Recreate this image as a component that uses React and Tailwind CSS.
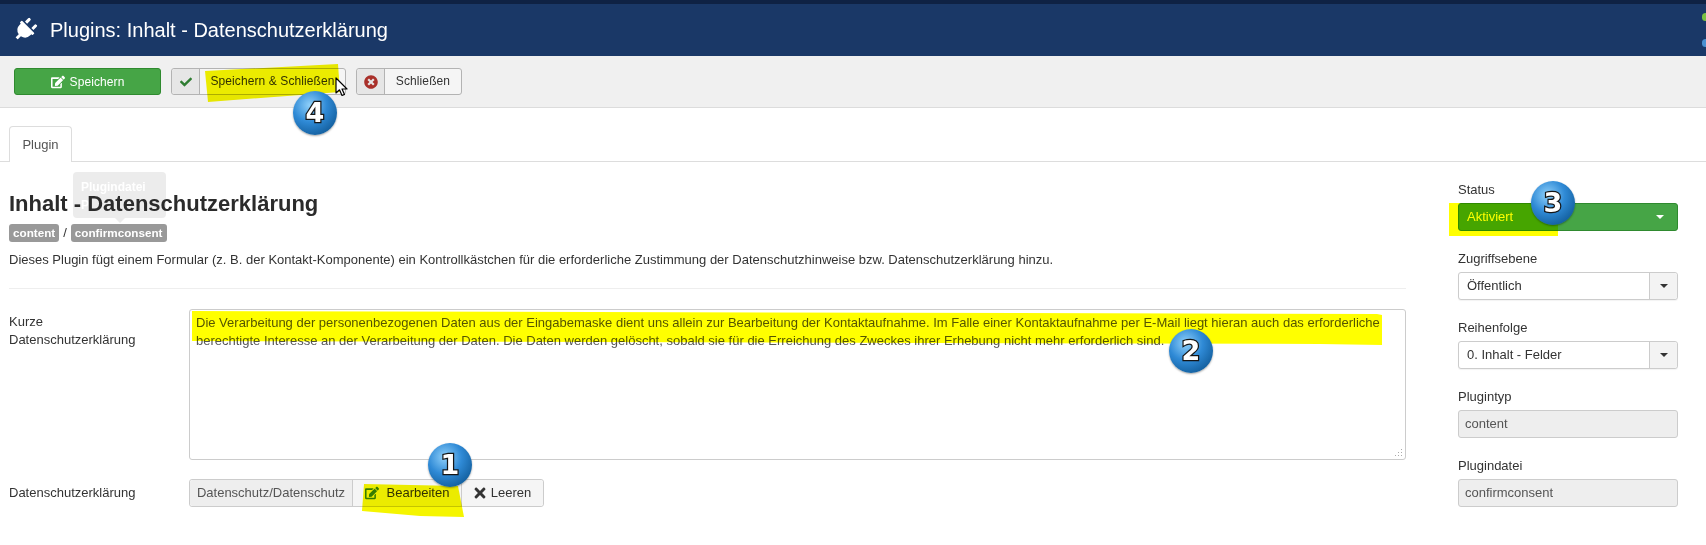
import { FaPlug, FaEdit, FaCheck, FaTimesCircle, FaTimes } from 'react-icons/fa'

const privacyText =
  'Die Verarbeitung der personenbezogenen Daten aus der Eingabemaske dient uns allein zur Bearbeitung der Kontaktaufnahme. Im Falle einer Kontaktaufnahme per E-Mail liegt hieran auch das erforderliche berechtigte Interesse an der Verarbeitung der Daten. Die Daten werden gelöscht, sobald sie für die Erreichung des Zweckes ihrer Erhebung nicht mehr erforderlich sind.'

function Caret({ className }) {
  return <span className={`w-0 h-0 border-x-[4px] border-x-transparent border-t-[4px] ${className}`} />
}

function Field({ label, children }) {
  return (
    <div className="mb-[18px]">
      <div className="h-[18px] leading-[19px] mb-[5px]">{label}</div>
      {children}
    </div>
  )
}

function SelectBox({ value }) {
  return (
    <div className="flex h-[28px] rounded-[3px] border border-[#ccc] bg-white shadow-[0_1px_1px_rgba(0,0,0,0.05)]">
      <div className="flex-1 pl-[8px] leading-[26px]">{value}</div>
      <div className="w-[28px] flex items-center justify-center bg-[#f3f3f3] border-l border-[#ccc] rounded-r-[3px]">
        <Caret className="border-t-[#333]" />
      </div>
    </div>
  )
}

function ReadOnlyBox({ value }) {
  return (
    <div className="h-[28px] rounded-[3px] border border-[#ccc] bg-[#eee] pl-[6px] leading-[26px] text-[#555]">
      {value}
    </div>
  )
}

function ToolbarButton({ icon, label, width }) {
  return (
    <button className={`flex h-[27px] ${width} rounded-[3px] border border-[#b3b3b3] bg-[#f5f5f5] text-[12px] tracking-[0.1px] text-[#333]`}>
      <span className="w-[28px] h-full flex items-center justify-center bg-[#e6e6e6] border-r border-[#b3b3b3] rounded-l-[3px]">
        {icon}
      </span>
      <span className="flex-1 h-full leading-[25px] text-center">{label}</span>
    </button>
  )
}

function NumberBall({ n, className }) {
  return (
    <div
      className={`absolute w-[44px] h-[44px] rounded-full flex items-center justify-center bg-[radial-gradient(circle_at_38%_32%,#8fd0fa_0%,#2f8ad6_42%,#14609f_78%,#0c3f70_100%)] shadow-[0_1px_2px_rgba(0,0,0,0.35)] text-white text-[27px] font-bold [font-family:'DejaVu_Sans',sans-serif] [-webkit-text-stroke:2.5px_#151515] [paint-order:stroke_fill] ${className}`}
    >
      {n}
    </div>
  )
}

export default function App() {
  return (
    <div className="relative w-[1706px] h-[545px] overflow-hidden bg-white text-[13px] text-[#333] font-['Liberation_Sans',Arial,sans-serif]">
      <div className="h-[4px] bg-[#0f2244]" />
      <header className="h-[52px] bg-[#1a3867] flex items-center pl-[13px] text-white">
        <FaPlug className="w-[24px] h-[24px] rotate-45" />
        <h2 className="ml-[13px] text-[20px]">Plugins: Inhalt - Datenschutzerklärung</h2>
      </header>

      <div className="h-[52px] bg-[#f0f0f0] border-b border-[#dcdcdc] flex items-start gap-[10px] pl-[14px] pt-[12px]">
        <button className="h-[27px] w-[147px] rounded-[3px] border border-[#2f8a2f] bg-[#46a546] text-white text-[12px] tracking-[0.1px] flex items-center justify-center gap-[5px]">
          <FaEdit className="w-[14px] h-[14px]" />
          Speichern
        </button>
        <ToolbarButton width="w-[175px]" label="Speichern & Schließen" icon={<FaCheck className="w-[12px] h-[12px] text-[#2f7d32]" />} />
        <ToolbarButton width="w-[106px]" label="Schließen" icon={<FaTimesCircle className="w-[14px] h-[14px] text-[#a9302a]" />} />
      </div>

      <div className="mt-[18px] h-[36px] pl-[9px] border-b border-[#ddd]">
        <div className="w-[63px] h-[36px] bg-white border border-b-0 border-[#ddd] rounded-t-[4px] text-center leading-[35px] text-[#555]">
          Plugin
        </div>
      </div>

      <div className="flex pl-[9px]">
        <main className="relative w-[1397px]">
          <div className="absolute left-[64px] top-[10px] w-[93px] h-[46px] rounded-[4px] bg-[#ececec] pl-[8px] pt-[6px] text-white text-[12px] font-bold leading-[18px]">
            Plugindatei
            <br />P
            <span className="absolute left-[42px] top-[46px] w-0 h-0 border-x-[5px] border-x-transparent border-t-[5px] border-t-[#ececec]" />
          </div>

          <h1 className="relative mt-[29px] text-[22px] leading-[26px] font-bold text-[#2b2b2b]">Inhalt - Datenschutzerklärung</h1>

          <div className="relative mt-[7px] flex items-center h-[18px]">
            <span className="h-[18px] px-[4px] rounded-[3px] bg-[#999] text-white text-[11.7px] font-bold leading-[18px]">content</span>
            <span className="mx-[4px]">/</span>
            <span className="h-[18px] px-[4px] rounded-[3px] bg-[#999] text-white text-[11.7px] font-bold leading-[18px]">confirmconsent</span>
          </div>

          <p className="mt-[9px] leading-[18px]">
            Dieses Plugin fügt einem Formular (z. B. der Kontakt-Komponente) ein Kontrollkästchen für die erforderliche Zustimmung der Datenschutzhinweise bzw. Datenschutzerklärung hinzu.
          </p>

          <hr className="mt-[19px] border-t border-[#eee]" />

          <div className="mt-[20px] flex">
            <label className="w-[180px] pt-[4px] leading-[18px]">
              Kurze
              <br />
              Datenschutzerklärung
            </label>
            <div className="relative flex">
              <textarea
                readOnly
                defaultValue={privacyText}
                className="w-[1217px] h-[151px] rounded-[3px] border border-[#ccc] px-[6px] py-[4px] leading-[18px] text-[#555] outline-none resize-none"
              />
              {/* resize grip */}
              <svg className="absolute right-[3px] bottom-[3px]" width="9" height="9" viewBox="0 0 9 9">
                <g fill="#aaa">
                  <rect x="7" y="1" width="1" height="1" />
                  <rect x="7" y="4" width="1" height="1" />
                  <rect x="4" y="4" width="1" height="1" />
                  <rect x="7" y="7" width="1" height="1" />
                  <rect x="4" y="7" width="1" height="1" />
                  <rect x="1" y="7" width="1" height="1" />
                </g>
              </svg>
            </div>
          </div>

          <div className="mt-[19px] flex items-center">
            <label className="w-[180px]">Datenschutzerklärung</label>
            <div className="flex h-[28px] rounded-[3px] border border-[#ccc]">
              <span className="w-[163px] bg-[#eee] border-r border-[#ccc] rounded-l-[3px] text-center leading-[26px] text-[#555]">
                Datenschutz/Datenschutz
              </span>
              <button className="w-[109px] bg-[#f5f5f5] border-r border-[#ccc] flex items-center justify-center gap-[8px]">
                <FaEdit className="w-[14px] h-[14px] text-[#378137]" />
                Bearbeiten
              </button>
              <button className="w-[81px] bg-[#f5f5f5] rounded-r-[3px] flex items-center justify-center gap-[3px] pr-[2px]">
                <FaTimes className="w-[16px] h-[16px]" />
                Leeren
              </button>
            </div>
          </div>
        </main>

        <aside className="ml-[52px] w-[220px] pt-[18px]">
          <Field label="Status">
            <div className="flex items-center justify-between h-[28px] rounded-[3px] border border-[#2f8a2f] bg-[#46a546] pl-[8px] pr-[13px] text-white">
              Aktiviert
              <Caret className="border-t-white" />
            </div>
          </Field>
          <Field label="Zugriffsebene">
            <SelectBox value="Öffentlich" />
          </Field>
          <Field label="Reihenfolge">
            <SelectBox value="0. Inhalt - Felder" />
          </Field>
          <Field label="Plugintyp">
            <ReadOnlyBox value="content" />
          </Field>
          <Field label="Plugindatei">
            <ReadOnlyBox value="confirmconsent" />
          </Field>
        </aside>
      </div>

      <span className="absolute right-[-3px] top-[13px] w-[7px] h-[8px] rounded-full bg-[#7ac143]" />
      <span className="absolute right-[-3px] top-[39px] w-[7px] h-[8px] rounded-full bg-[#4a90d0]" />

      {/* yellow marker strokes on top of the screenshot */}
      <svg className="absolute inset-0 mix-blend-multiply pointer-events-none" width="1706" height="545">
        <polygon fill="#f5f500" points="205,71 338,64 340,92 208,102" />
        <polygon fill="#ffff00" points="192,311 1377,314 1382,315 1382,345 1320,344 192,341" />
        <polygon fill="#ffff00" points="1449,203 1558,203 1558,236 1449,236" />
        <polygon fill="#f5f500" points="364,484 458,486 464,517 420,516 362,511" />
      </svg>

      <svg className="absolute left-[335px] top-[77px]" width="14" height="21" viewBox="0 0 14 21">
        <path d="M1 1 L1 16 L4.5 12.8 L7 18.5 L9.5 17.4 L7 12 L12 12 Z" fill="#fff" stroke="#000" strokeWidth="1.2" strokeLinejoin="round" />
      </svg>

      <NumberBall n="1" className="left-[428px] top-[443px]" />
      <NumberBall n="2" className="left-[1169px] top-[329px]" />
      <NumberBall n="3" className="left-[1531px] top-[181px]" />
      <NumberBall n="4" className="left-[293px] top-[91px]" />
    </div>
  )
}
